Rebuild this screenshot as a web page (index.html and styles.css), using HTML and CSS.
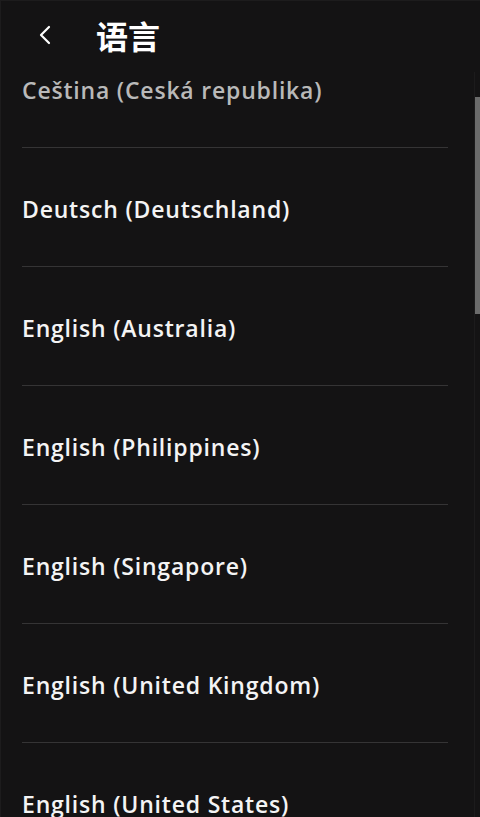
FILE: index.html
```html
<!DOCTYPE html>
<html lang="zh">
<head>
<meta charset="utf-8">
<title>语言</title>
<link rel="stylesheet" href="styles.css">
</head>
<body>
<div class="app">
  <header class="topbar">
    <button class="back" aria-label="返回">
      <svg width="14" height="20" viewBox="0 0 14 20"><path d="M11 2 L3 10 L11 18" fill="none" stroke="#ffffff" stroke-width="2.2" stroke-linecap="round" stroke-linejoin="round"/></svg>
    </button>
    <h1 class="title">语言</h1>
  </header>
  <div class="viewport">
    <div class="list-clip">
      <ul class="list">
        <li class="item faded">Ceština (Ceská republika)</li>
        <li class="item">Deutsch (Deutschland)</li>
        <li class="item">English (Australia)</li>
        <li class="item">English (Philippines)</li>
        <li class="item">English (Singapore)</li>
        <li class="item">English (United Kingdom)</li>
        <li class="item">English (United States)</li>
      </ul>
    </div>
    <div class="track"><div class="thumb"></div></div>
  </div>
</div>
</body>
</html>
```
FILE: styles.css
```css
* { box-sizing: border-box; }
html, body { margin: 0; padding: 0; }
body {
  background: #141314;
  color: #ffffff;
  font-family: "Open Sans", "Noto Sans CJK SC", sans-serif;
  width: 480px;
  height: 817px;
  overflow: hidden;
}
.app {
  height: 817px;
  display: flex;
  flex-direction: column;
  box-shadow: inset 1px 1px 0 #1d1c1d;
}
.topbar {
  height: 72px;
  flex: none;
  display: flex;
  align-items: center;
  padding-left: 38px;
  padding-bottom: 3px;
}
.back {
  background: none;
  border: 0;
  padding: 0;
  width: 14px;
  height: 20px;
  display: flex;
  cursor: pointer;
}
.title {
  margin: 0 0 0 44px;
  font-family: "Noto Sans CJK SC", sans-serif;
  font-weight: 700;
  font-size: 32px;
  line-height: 40px;
  color: #ffffff;
}
.viewport {
  flex: 1;
  display: flex;
  min-height: 0;
}
.list-clip {
  flex: 1;
  overflow: hidden;
}
.list {
  list-style: none;
  margin: -43px 0 0 0;
  padding: 0 26px 0 22px;
}
.item {
  height: 119px;
  border-bottom: 1px solid #353435;
  display: flex;
  align-items: center;
  padding-top: 4px;
  font-size: 23px;
  font-weight: 600;
  letter-spacing: 0.8px;
  color: #f4f4f4;
}
.item.faded { color: #b9b9b9; }
.track {
  width: 6px;
  flex: none;
  border-left: 1px solid #1c1b1c;
}
.thumb {
  margin-top: 25px;
  height: 217px;
  background: #6b6b6b;
}
```
